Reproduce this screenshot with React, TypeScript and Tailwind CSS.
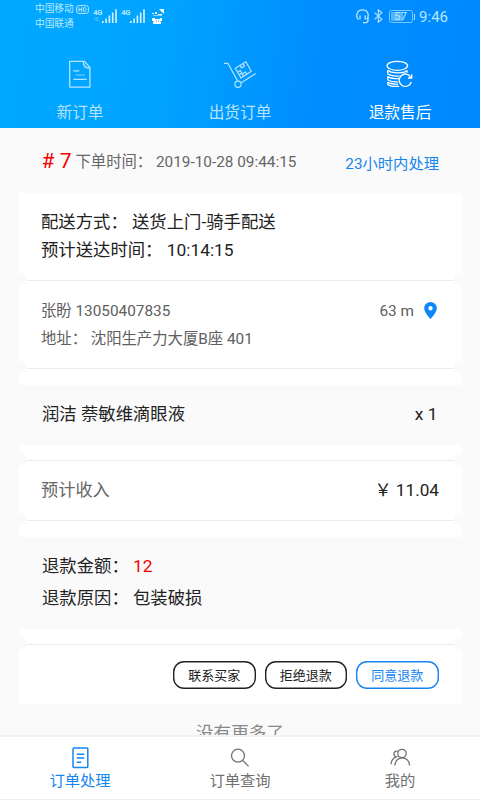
import type { ReactNode } from 'react'
import clsx from 'clsx'

function SignalBars() {
  return (
    <svg width="15" height="14" viewBox="0 0 15 14" fill="#d9f2ff">
      <path d="M0 12h1.600v2H0zM3.300 9.500h1.600V14H3.300zM6.600 6.500h1.600V14H6.600zM9.900 3.500h1.600V14H9.900zM13.200 .3h1.600V14h-1.600z" />
    </svg>
  )
}

function StatusBar() {
  return (
    <div className="flex justify-between h-8 pl-[35px] pr-8 text-[#b8e7ff]">
      <div className="flex">
        <div className="pt-[2px] text-[9.7px] leading-[14.5px]">
          <div className="flex items-center">
            中国移动
            <svg width="13" height="9" viewBox="0 0 13 9" className="ml-[2.5px]" fill="none" stroke="currentColor">
              <rect x="0.6" y="0.6" width="11.8" height="7.8" rx="2" />
              <path d="M3 2.300v4.400M5.600 2.300v4.400M3 4.500h2.600M7.600 2.600v3.800h1c2.200 0 2.200-3.800 0-3.800z" />
            </svg>
          </div>
          <div>中国联通</div>
        </div>
        <div className="flex pt-[9px] ml-[4px]">
          <div className="w-[9px] text-[7.5px] leading-[8px] font-bold tracking-tight">
            4G
            <div className="text-[5px] font-normal opacity-60 leading-[5px]">1S</div>
          </div>
          <SignalBars />
          <div className="w-[9px] ml-[4px] text-[7.5px] leading-[8px] font-bold tracking-tight">4G</div>
          <SignalBars />
        </div>
        <svg width="14" height="16" viewBox="0 0 14 16" className="ml-[6px] mt-[9px]" fill="white">
          <path d="M8 0h5v5zM1 4h2v1H1zM4 3h2v2H4zM7 5h4v1.400H2V6h5zM1 9h3v1h5V9h2v3H9.600l.6 3H2l.6-3H1z" />
          <path d="M5 11.400h1v1H5zM7 11.400h1v1H7z" fill="#00a3ff" />
        </svg>
      </div>
      <div className="flex items-start">
        <svg width="13" height="15" viewBox="0 0 13 15" className="mt-[9px]" fill="none" stroke="currentColor" strokeWidth="1.3">
          <path d="M2.400 10.600C-.6 7 .6 .8 6.500 .8s7.100 6.200 4.100 9.800" />
          <path d="M4 6.500v4M9.200 6.500v4M12 8.300v3.300c0 1.500-1 2-2 2H7" />
        </svg>
        <svg width="9" height="14" viewBox="0 0 9 14" className="ml-[5px] mt-[9px]" fill="none" stroke="currentColor" strokeWidth="1.1">
          <path d="M.5 3.600l7.400 6.600-3.600 3V.8l3.600 3L.5 10.400" />
        </svg>
        <div className="relative flex items-center justify-center w-[24px] h-[13px] ml-[6px] mt-[10px] rounded-[2.5px] border border-[#7cc9ff] text-[11.5px] leading-none">
          <span className="absolute left-px top-px bottom-px w-[12px] rounded-[1px] bg-[#52b5ff]" />
          <span className="relative">57</span>
        </div>
        <span className="w-[1.5px] h-[6px] mt-[13.5px] ml-[1px] bg-[#a5dcff]" />
        <span className="ml-[4px] mt-[7px] text-[15px] leading-[20px]">9:46</span>
      </div>
    </div>
  )
}

function NewOrderIcon() {
  return (
    <svg width="24" height="29" viewBox="0 0 24 29" fill="none" stroke="currentColor" strokeWidth="1.3" strokeLinejoin="round">
      <path d="M1.700 1.300h14.600l5.600 6.200v19.700H1.700z" />
      <path d="M15.300 1.500c0 4.500 1.600 6.700 6.400 6.700" />
      <path d="M5.300 10.800h6M5.300 19.300h13.400" />
      <path d="M7.800 15.100h9" opacity=".55" />
    </svg>
  )
}

function TrolleyIcon() {
  return (
    <svg width="34" height="29" viewBox="0 0 34 29" fill="none" stroke="currentColor" strokeWidth="1.2" strokeLinejoin="round">
      <path d="M1 3.300h3.900l9.700 17.600" />
      <circle cx="15" cy="24.300" r="3.100" />
      <path d="M18.300 22.700l14.400-9.300" />
      <path d="M12.300 8.300l10.600-6.500 5.400 9.500-10.200 6.800z" />
      <path d="M17.200 5.400l1.300 2.500 3-1.800-1.400-2.500" />
      <path d="M14.700 12.100l2.600-1.600 1.500 2.500-2.600 1.700M20.500 16.300l-1.200-2.300 3.200-2 1.300 2.200" />
    </svg>
  )
}

function RefundIcon() {
  return (
    <svg width="27" height="28" viewBox="0 0 27 28" fill="none" stroke="currentColor" strokeWidth="1.3" strokeLinejoin="round" className="-ml-[2px]">
      <ellipse cx="11.3" cy="5.8" rx="10.3" ry="4.5" />
      <path d="M1.800 10.300c1.800 1.700 5.200 2.500 10 2.500 4 0 7.300-.6 9.200-2.100v2" />
      <path d="M1.800 10.300v3.400c2 1.600 5.500 2.500 11.700 2.500" />
      <path d="M13 18.700c-5 .1-8.800-.5-11.200-2.100v3.200c2.200 1.600 5.600 2.300 10.400 2.300" />
      <path d="M12 24.300c-4.300 0-7.800-.5-10.200-1.900v2c2.200 1.700 6 2.300 11.200 2" />
      <path d="M24.800 17.200a6.200 6.200 0 1 0 .5 4.800" />
      <path d="M25.800 14.200v3.800h-3.800" />
    </svg>
  )
}

const tabs = [
  { label: '新订单', icon: <NewOrderIcon />, active: false },
  { label: '出货订单', icon: <TrolleyIcon />, active: false },
  { label: '退款售后', icon: <RefundIcon />, active: true },
]

// ticket style separator with a round notch on both ends
function Divider() {
  return (
    <div className="relative h-px px-2 shrink-0">
      <div className="h-px bg-[#ebebeb]" />
      <span className="absolute -left-[5px] -top-[7px] size-[13px] rounded-full bg-[#fafafa]" />
      <span className="absolute -right-[5px] -top-[7px] size-[13px] rounded-full bg-[#fafafa]" />
    </div>
  )
}

function PillButton({ children, primary = false }: { children: ReactNode; primary?: boolean }) {
  return (
    <button
      className={clsx(
        'w-[82.5px] h-7 rounded-[11px] text-[13px] leading-none',
        primary
          ? 'text-[#1684ee] shadow-[inset_0_0_0_1.4px_#1684ee]'
          : 'text-[#222] shadow-[inset_0_0_0_1.4px_#222]'
      )}
    >
      {children}
    </button>
  )
}

function NavItem({ label, icon, active = false }: { label: string; icon: ReactNode; active?: boolean }) {
  return (
    <div className={clsx('flex-1 flex flex-col items-center pt-[10px]', active ? 'text-[#1586ee]' : 'text-[#707070]')}>
      <div className="h-[22px]">{icon}</div>
      <span className="text-[15.3px] leading-[24px]">{label}</span>
    </div>
  )
}

export default function App() {
  return (
    <div className="flex flex-col w-[480px] h-[800px] overflow-hidden bg-[#fafafa] font-[Roboto,'Noto_Sans_CJK_SC',sans-serif] text-[#222]">
      <header className="h-32 shrink-0 bg-[linear-gradient(98deg,#00a8ff_0%,#00a4ff_32%,#008eff_66%,#0088ff_100%)]">
        <StatusBar />
        <div className="flex">
          {tabs.map((tab) => (
            <div
              key={tab.label}
              className={clsx('flex-1 flex flex-col items-center pt-[28px]', tab.active ? 'text-white' : 'text-[#b5e3ff]')}
            >
              <div className="h-[42px]">{tab.icon}</div>
              <span className="text-[15.7px] leading-[22px]">{tab.label}</span>
            </div>
          ))}
        </div>
      </header>

      <main className="flex-1 min-h-0 overflow-hidden px-[18.5px]">
        <div className="flex items-center h-[65px] pl-[23px] pr-[22.5px]">
          <span className="mt-[2px] text-[21px] text-[#f40000]"># 7</span>
          <span className="ml-[4px] mt-[4px] text-[15.35px] text-[#666] whitespace-pre">下单时间： 2019-10-28 09:44:15</span>
          <span className="ml-auto mt-[7px] text-[15.3px] text-[#1586ee]">23小时内处理</span>
        </div>

        <section className="bg-white">
          <div className="h-[87px] pl-[22.5px] pt-[15px] text-[17.35px] leading-[28px]">
            <p>配送方式： 送货上门-骑手配送</p>
            <p>预计送达时间： 10:14:15</p>
          </div>
          <Divider />
          <div className="flex justify-between h-[87px] pl-[22.5px] pr-[25px] pt-4 text-[15.35px] leading-[28px] text-[#606060]">
            <div>
              <p>张盼 13050407835</p>
              <p>地址： 沈阳生产力大厦B座 401</p>
            </div>
            <div className="flex items-center gap-[9.5px] h-[28px]">
              63 m
              <svg width="13" height="17" viewBox="0 0 13 17" fill="#0a88fa" className="mb-px">
                <path fillRule="evenodd" d="M6.500 0A6.300 6.300 0 0 0 .2 6.300C.2 10.700 6.500 17 6.500 17s6.300-6.300 6.300-10.700A6.300 6.300 0 0 0 6.500 0zm0 4.100a2.200 2.200 0 1 1 0 4.400 2.200 2.200 0 0 1 0-4.400z" />
              </svg>
            </div>
          </div>
          <Divider />
          <div className="h-4" />
        </section>

        <div className="flex items-center justify-between h-[60px] pl-[23.5px] pr-6 pb-[2px] text-[17.35px]">
          <span>润洁 萘敏维滴眼液</span>
          <span>x 1</span>
        </div>

        <section className="bg-white">
          <div className="h-[15px]" />
          <Divider />
          <div className="flex items-center justify-between h-[59px] pl-[22.5px] pr-[22.5px] text-[17.2px]">
            <span className="text-[#666]">预计收入</span>
            <span>￥ 11.04</span>
          </div>
          <Divider />
          <div className="h-4" />
        </section>

        <div className="h-[92px] pl-[23.5px] pt-[13px] text-[17.35px] leading-[32px]">
          <p>退款金额： <span className="text-[#f40000]">12</span></p>
          <p>退款原因： 包装破损</p>
        </div>

        <section className="bg-white">
          <div className="h-[15px]" />
          <Divider />
          <div className="flex justify-end gap-[9px] h-[59px] pt-4 pr-[23px]">
            <PillButton>联系买家</PillButton>
            <PillButton>拒绝退款</PillButton>
            <PillButton primary>同意退款</PillButton>
          </div>
        </section>

        <p className="pt-4 text-center text-[17.6px] leading-[26px] text-[#888]">没有更多了</p>
      </main>

      <nav className="flex h-[65px] shrink-0 border-t-2 border-b border-t-[#f2f2f2] border-b-[#eee] bg-white">
        <NavItem
          label="订单处理"
          active
          icon={
            <svg width="17" height="22" viewBox="0 0 17 22" fill="none" stroke="currentColor" strokeWidth="1.5">
              <rect x="1" y="1" width="14.8" height="19.5" rx="1" />
              <path d="M4.700 7.200h7.600M4.700 11.100h7.600M4.700 15.200h4.600" />
            </svg>
          }
        />
        <NavItem
          label="订单查询"
          icon={
            <svg width="20" height="22" viewBox="0 0 20 22" fill="none" stroke="currentColor" strokeWidth="1.3">
              <circle cx="8" cy="8.7" r="6.5" />
              <path d="M12.600 13.400l6 6" />
            </svg>
          }
        />
        <NavItem
          label="我的"
          icon={
            <svg width="21" height="22" viewBox="0 0 21 22" fill="none" stroke="currentColor" strokeWidth="1.3">
              <circle cx="12" cy="6.5" r="4.2" />
              <path d="M5 18.500v-.5c0-9.500 14.500-9.500 14.500 .5" />
              <path d="M7.700 4.300C3.300 3.200 2.800 9.200 6.300 9.800C3 11 1.200 13 1 17.200" />
            </svg>
          }
        />
      </nav>
    </div>
  )
}
